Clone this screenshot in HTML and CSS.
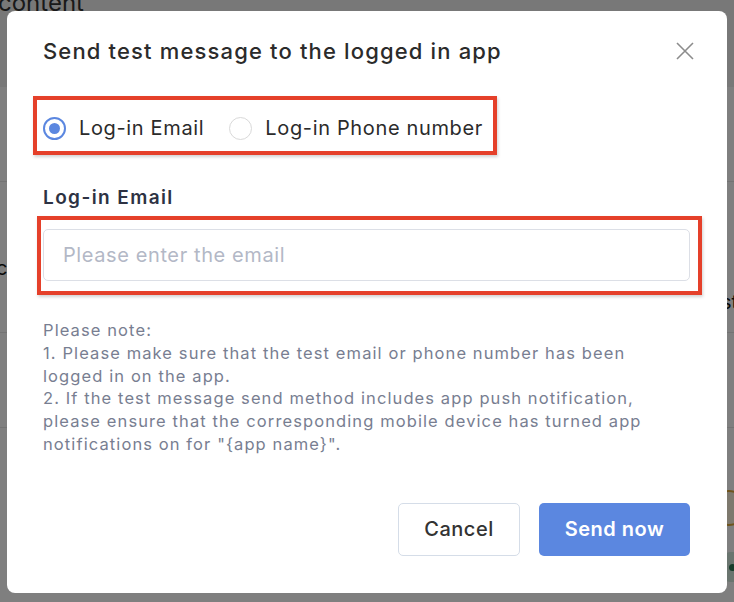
FILE: index.html
```html
<!DOCTYPE html>
<html lang="en">
<head>
    <meta charset="UTF-8">
    <meta name="viewport" content="width=device-width, initial-scale=1.0">
    <title>Send test message</title>
    <link rel="stylesheet" href="styles.css">
</head>
<body>
    <!-- page behind the modal -->
    <div class="page">
        <div class="page-head">
            <h2 class="page-title">content</h2>
        </div>
        <div class="page-row"></div>
        <div class="page-row row-text">
            <span class="cell-left">co</span>
            <span class="cell-right">st</span>
        </div>
        <div class="page-row"></div>
        <div class="page-row row-status">
            <span class="status-ring"><span class="dot"></span></span>
            <span class="status-pill"><span class="dot"></span></span>
        </div>
    </div>

    <div class="overlay">
        <div class="dialog">
            <div class="dialog-header">
                <h3 class="dialog-title">Send test message to the logged in app</h3>
                <button class="close-btn" aria-label="Close">
                    <svg width="18" height="18" viewBox="0 0 18 18">
                        <path d="M1 1 L17 17 M17 1 L1 17" stroke="#8c8c8c" stroke-width="1.6" fill="none"/>
                    </svg>
                </button>
            </div>

            <div class="mark mark-radios">
                <label class="radio checked">
                    <span class="radio-circle"></span>
                    <span class="radio-label">Log-in Email</span>
                </label>
                <label class="radio">
                    <span class="radio-circle"></span>
                    <span class="radio-label">Log-in Phone number</span>
                </label>
            </div>

            <div class="field-label">Log-in Email</div>
            <div class="mark mark-input">
                <input type="text" class="text-input" placeholder="Please enter the email">
            </div>

            <div class="note">
                <div>Please note:</div>
                <div>1. Please make sure that the test email or phone number has been logged in on the app.</div>
                <div>2. If the test message send method includes app push notification, please ensure that the corresponding mobile device has turned app notifications on for "{app name}".</div>
            </div>

            <div class="dialog-footer">
                <button class="btn btn-default">Cancel</button>
                <button class="btn btn-primary">Send now</button>
            </div>
        </div>
    </div>
</body>
</html>
```
FILE: styles.css
```css
html, body {
    margin: 0;
    padding: 0;
}
body {
    font-family: Inter, "Noto Sans", "Liberation Sans", sans-serif;
    width: 734px;
    height: 602px;
    overflow: hidden;
    background: #fff;
}

/* background page */
.page {
    height: 602px;
}
.page-head {
    height: 87px;
    background: #f0f0f0;
    overflow: hidden;
}
.page-title {
    margin: -9px 0 0 -2px;
    font-size: 24px;
    font-weight: normal;
    color: #333;
    line-height: 24px;
}
.page-row {
    height: 94px;
    border-bottom: 1px solid #e6e6e6;
}
.row-text {
    height: 150px;
    display: flex;
    justify-content: space-between;
    font-size: 20px;
    color: #111;
}
.cell-left {
    margin: 74px 0 0 -4px;
}
.cell-right {
    margin: 108px -4px 0 0;
}
.row-status {
    height: 170px;
    border-bottom: none;
    display: flex;
    flex-direction: column;
    align-items: flex-end;
}
.status-ring {
    margin: 62px -14px 0 0;
    width: 34px;
    height: 32px;
    border: 2px solid #e0a93b;
    border-radius: 50%;
    background: #fdf3dc;
    display: flex;
    align-items: center;
}
.status-ring .dot {
    margin-left: 2px;
    background: #d99a1e;
}
.status-pill {
    margin: 26px -20px 0 0;
    width: 30px;
    height: 30px;
    border-radius: 6px;
    background: #d5eadf;
    display: flex;
    align-items: center;
}
.status-pill .dot {
    margin-left: 5px;
    background: #2f7a56;
}
.dot {
    width: 7px;
    height: 7px;
    border-radius: 50%;
}

/* modal */
.overlay {
    position: fixed;
    inset: 0;
    background: rgba(0, 0, 0, 0.5);
}
.dialog {
    box-sizing: border-box;
    margin: 11px 0 0 7px;
    width: 720px;
    height: 582px;
    background: #fff;
    border-radius: 8px;
    padding: 26px 37px 36px 36px;
}
.dialog-header {
    display: flex;
    justify-content: space-between;
    align-items: center;
}
.dialog-title {
    margin: 0;
    font-size: 22px;
    line-height: 28px;
    font-weight: 500;
    letter-spacing: 1.15px;
    color: #2b2b2b;
}
.close-btn {
    background: none;
    border: none;
    padding: 0;
    margin-right: -4px;
    width: 18px;
    height: 18px;
    cursor: pointer;
}

/* red annotation boxes */
.mark {
    border: 4px solid #e5402a;
    box-shadow: 1px 2px 3px rgba(0, 0, 0, 0.18);
}
.mark-radios {
    display: inline-flex;
    align-items: center;
    gap: 25px;
    margin: 31px 0 0 -10px;
    padding: 15px 10px 10px 6px;
}
.radio {
    display: flex;
    align-items: center;
    gap: 13px;
    cursor: pointer;
}
.radio-circle {
    box-sizing: border-box;
    width: 23px;
    height: 23px;
    border-radius: 50%;
    border: 1.5px solid #d9d9d9;
    display: flex;
    align-items: center;
    justify-content: center;
}
.radio.checked .radio-circle {
    border: 2px solid #5b87e0;
}
.radio.checked .radio-circle::after {
    content: "";
    width: 11px;
    height: 11px;
    border-radius: 50%;
    background: #5b87e0;
}
.radio-label {
    font-size: 20px;
    line-height: 26px;
    letter-spacing: 0.65px;
    color: #2b2b2b;
}

.field-label {
    margin-top: 31px;
    font-size: 19px;
    line-height: 24px;
    font-weight: 600;
    letter-spacing: 1.4px;
    color: #2d3243;
}
.mark-input {
    margin: 6px -12px 0 -6px;
    padding: 9px 8px 10px 2px;
}
.text-input {
    display: block;
    box-sizing: border-box;
    width: 100%;
    height: 52px;
    padding: 0 19px;
    border: 1.5px solid #dcdfe6;
    border-radius: 5px;
    font-family: inherit;
    font-size: 20px;
    letter-spacing: 0.6px;
    color: #333;
    outline: none;
}
.text-input::placeholder {
    color: #b3b8c6;
}

.note {
    margin-top: 24px;
    width: 615px;
    font-size: 16.5px;
    line-height: 22.8px;
    letter-spacing: 1.1px;
    color: #787e91;
}

.dialog-footer {
    display: flex;
    justify-content: flex-end;
    gap: 19px;
    margin-top: 47px;
}
.btn {
    height: 53px;
    border-radius: 5px;
    font-family: inherit;
    font-size: 20px;
    font-weight: 500;
    letter-spacing: 0.5px;
    cursor: pointer;
}
.btn-default {
    width: 122px;
    background: #fff;
    border: 1.5px solid #d5dde8;
    color: #333;
}
.btn-primary {
    width: 151px;
    background: #5b87e0;
    border: none;
    color: #fff;
    font-weight: 600;
}
```
